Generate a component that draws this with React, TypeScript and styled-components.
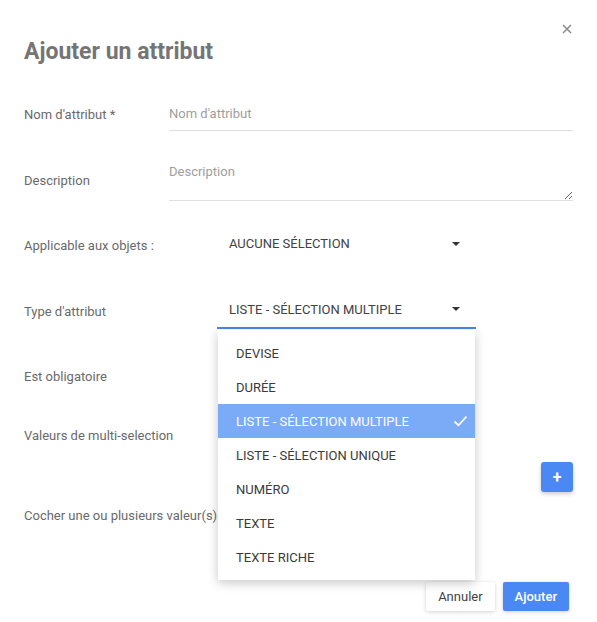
import React from "react";
import styled, { createGlobalStyle } from "styled-components";

const GlobalStyle = createGlobalStyle`
  html, body {
    margin: 0;
    padding: 0;
    background: #ffffff;
    font-family: Roboto, "Liberation Sans", Arial, sans-serif;
  }
  * { box-sizing: border-box; }
`;

const types = [
  "DEVISE",
  "DURÉE",
  "LISTE - SÉLECTION MULTIPLE",
  "LISTE - SÉLECTION UNIQUE",
  "NUMÉRO",
  "TEXTE",
  "TEXTE RICHE",
];

export default function App() {
  const selected = "LISTE - SÉLECTION MULTIPLE";

  return (
    <>
      <GlobalStyle />
      <Dialog>
        <CloseButton aria-label="Fermer">
          <svg width="10" height="10" viewBox="0 0 10 10">
            <path d="M1 1 L9 9 M9 1 L1 9" stroke="#8a8a8a" strokeWidth="1.5" />
          </svg>
        </CloseButton>

        <Title>Ajouter un attribut</Title>

        <Row $height={66}>
          <Label>Nom d'attribut *</Label>
          <TextInput placeholder="Nom d'attribut" />
        </Row>

        <Row $height={66}>
          <Label>Description</Label>
          <TextArea placeholder="Description" />
        </Row>

        <Row $height={65}>
          <Label>Applicable aux objets :</Label>
          <SelectBox>
            <SelectValue>AUCUNE SÉLECTION</SelectValue>
            <Caret />
          </SelectBox>
        </Row>

        <Row $height={66} $front>
          <Label>Type d'attribut</Label>
          <SelectBox $open>
            <SelectValue>{selected}</SelectValue>
            <Caret />
            <Menu>
              {types.map((t) => (
                <MenuItem key={t} $active={t === selected}>
                  {t}
                  {t === selected && (
                    <svg width="15" height="12" viewBox="0 0 15 12">
                      <path
                        d="M1.5 6.5 L5.5 10.3 L13.5 1.5"
                        fill="none"
                        stroke="#ffffff"
                        strokeWidth="1.8"
                      />
                    </svg>
                  )}
                </MenuItem>
              ))}
            </Menu>
          </SelectBox>
        </Row>

        <Row $height={65}>
          <Label>Est obligatoire</Label>
        </Row>

        <Row $height={53}>
          <Label>Valeurs de multi-selection</Label>
        </Row>

        <ActionRow>
          <AddButton>+</AddButton>
        </ActionRow>

        <Row $height={46}>
          <Label>Cocher une ou plusieurs valeur(s)</Label>
        </Row>

        <Footer>
          <Button>Annuler</Button>
          <Button $primary>Ajouter</Button>
        </Footer>
      </Dialog>
    </>
  );
}

const Dialog = styled.div`
  position: relative;
  width: 597px;
  height: 622px;
  padding: 37px 24px 0 24px;
  background: #fff;
`;

const CloseButton = styled.button`
  position: absolute;
  top: 24px;
  right: 25px;
  width: 10px;
  height: 10px;
  padding: 0;
  border: none;
  background: transparent;
  display: flex;
`;

const Title = styled.h2`
  margin: 0 0 14px 0;
  height: 30px;
  line-height: 30px;
  font-size: 23px;
  font-weight: 700;
  color: #757575;
`;

const Row = styled.div<{ $height: number; $front?: boolean }>`
  display: flex;
  align-items: center;
  height: ${(p) => p.$height}px;
  position: relative;
  z-index: ${(p) => (p.$front ? 5 : 1)};
`;

const Label = styled.div`
  width: 145px;
  flex-shrink: 0;
  font-size: 13px;
  color: #6a6a6a;
  white-space: nowrap;
`;

const TextInput = styled.input`
  flex: 1;
  height: 34px;
  padding: 0;
  border: none;
  border-bottom: 1px solid #e0e0e0;
  font-family: inherit;
  font-size: 13px;
  color: #333;
  outline: none;
  &::placeholder {
    color: #9e9e9e;
  }
`;

const TextArea = styled.textarea`
  flex: 1;
  height: 43px;
  padding: 6px 0 0 0;
  border: none;
  border-bottom: 1px solid #e0e0e0;
  font-family: inherit;
  font-size: 13px;
  color: #333;
  outline: none;
  resize: vertical;
  margin-top: -2px;
  &::placeholder {
    color: #9e9e9e;
  }
`;

const SelectBox = styled.div<{ $open?: boolean }>`
  position: relative;
  margin-left: 48px;
  width: 259px;
  height: 36px;
  padding: 0 12px;
  display: flex;
  align-items: center;
  justify-content: space-between;
  border-bottom: 2px solid ${(p) => (p.$open ? "#4a86f0" : "transparent")};
`;

const SelectValue = styled.span`
  font-size: 13px;
  color: #424242;
  padding-bottom: 2px;
`;

const Caret = styled.span`
  width: 0;
  height: 0;
  margin-right: 4px;
  margin-bottom: 2px;
  border-left: 4px solid transparent;
  border-right: 4px solid transparent;
  border-top: 4px solid #333;
`;

const Menu = styled.ul`
  position: absolute;
  top: calc(100% + 2px);
  left: 1px;
  width: 257px;
  margin: 1px 0 0 0;
  padding: 6px 0;
  list-style: none;
  background: #fff;
  box-shadow: 0 3px 10px rgba(0, 0, 0, 0.22);
`;

const MenuItem = styled.li<{ $active?: boolean }>`
  height: 34px;
  padding: 0 7px 0 18px;
  display: flex;
  align-items: center;
  justify-content: space-between;
  font-size: 13px;
  color: ${(p) => (p.$active ? "#ffffff" : "#3a3a3a")};
  background: ${(p) => (p.$active ? "#7baaf7" : "transparent")};
`;

const ActionRow = styled.div`
  display: flex;
  justify-content: flex-end;
  height: 30px;
`;

const AddButton = styled.button`
  width: 32px;
  height: 30px;
  border: none;
  border-radius: 3px;
  background: #4a89f3;
  color: #fff;
  font-family: inherit;
  font-size: 16px;
  font-weight: 700;
  box-shadow: 0 2px 4px rgba(0, 0, 0, 0.2);
  padding: 0;
`;

const Footer = styled.div`
  display: flex;
  justify-content: flex-end;
  gap: 8px;
  margin-top: 44px;
  padding-right: 4px;
`;

const Button = styled.button<{ $primary?: boolean }>`
  height: 29px;
  padding: 0 12px;
  border: none;
  border-radius: 2px;
  font-family: inherit;
  font-size: 13px;
  font-weight: ${(p) => (p.$primary ? 500 : 400)};
  color: ${(p) => (p.$primary ? "#ffffff" : "#424242")};
  background: ${(p) => (p.$primary ? "#4a89f3" : "#ffffff")};
  box-shadow: 0 1px 4px rgba(0, 0, 0, 0.18);
`;
